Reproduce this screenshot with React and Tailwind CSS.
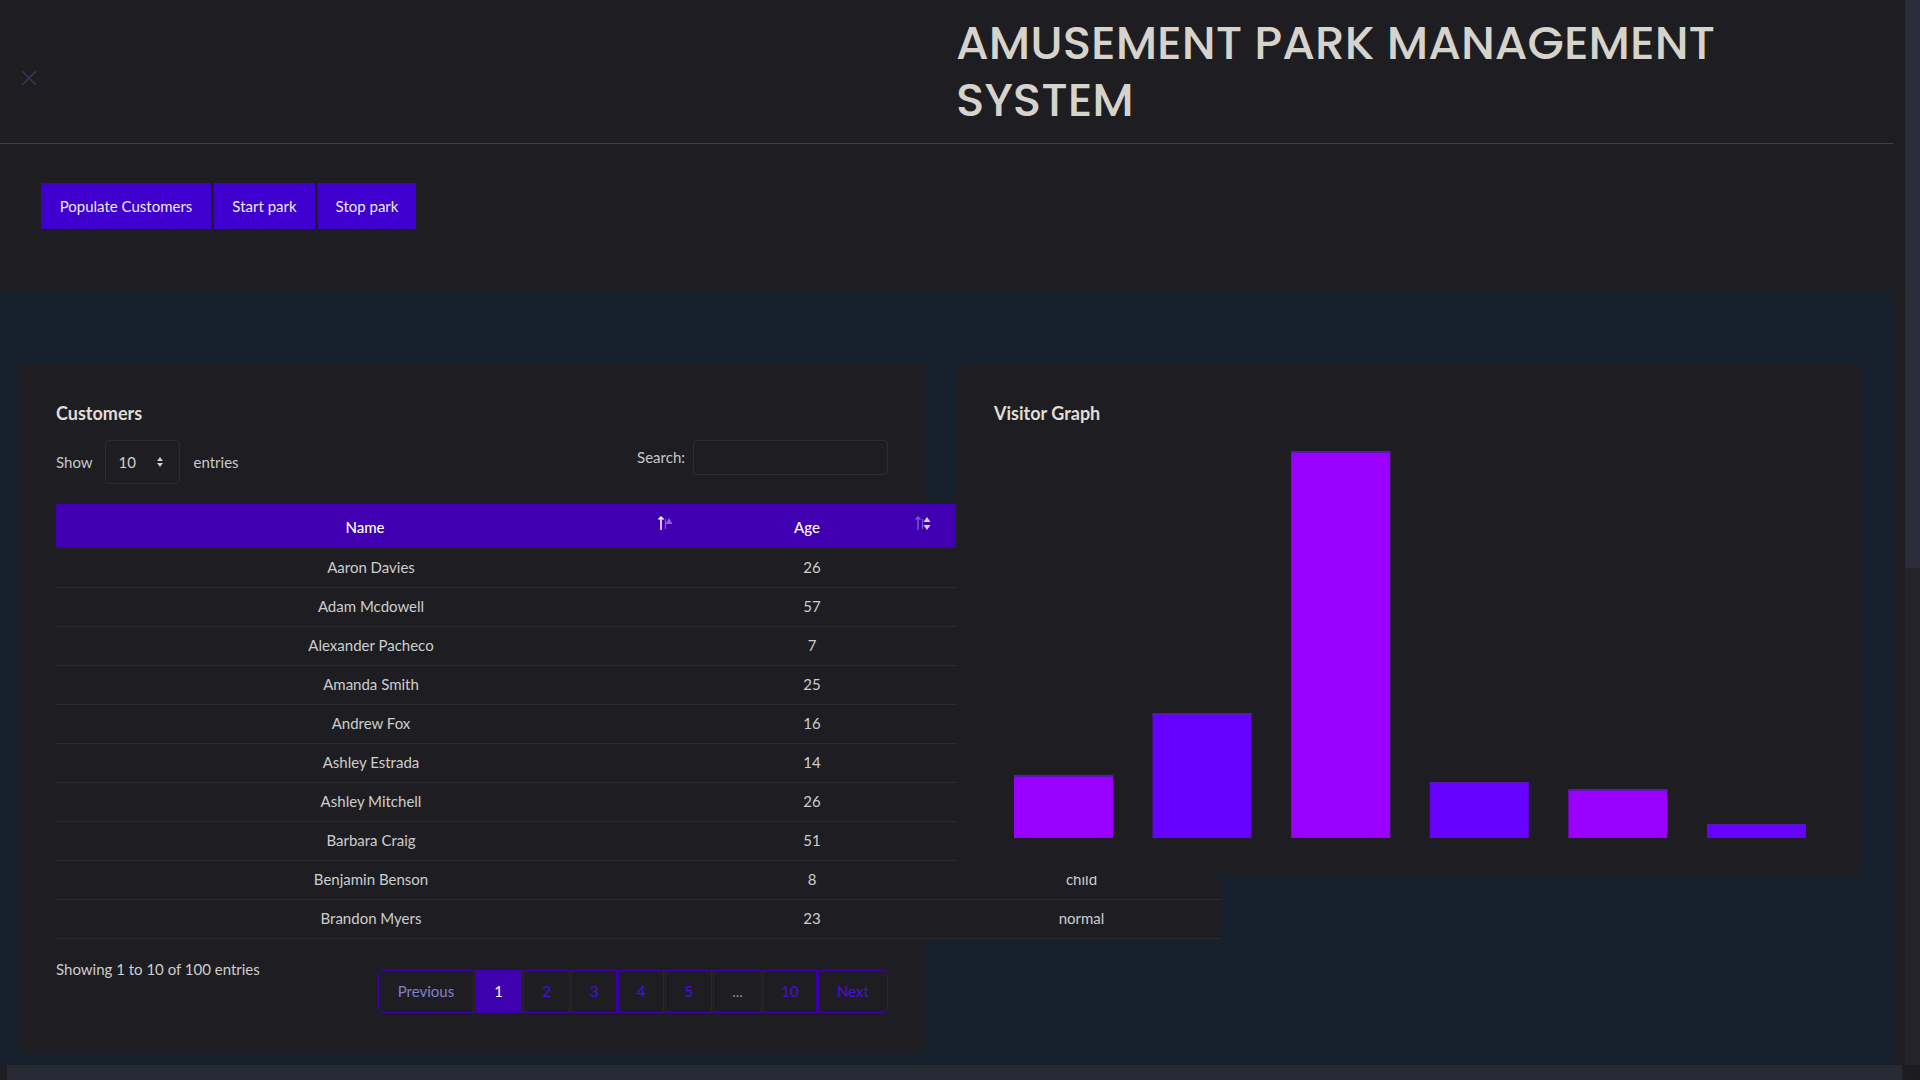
import React from "react";

const customers = [
  { name: "Aaron Davies", age: 26, type: "normal" },
  { name: "Adam Mcdowell", age: 57, type: "normal" },
  { name: "Alexander Pacheco", age: 7, type: "child" },
  { name: "Amanda Smith", age: 25, type: "normal" },
  { name: "Andrew Fox", age: 16, type: "child" },
  { name: "Ashley Estrada", age: 14, type: "child" },
  { name: "Ashley Mitchell", age: 26, type: "normal" },
  { name: "Barbara Craig", age: 51, type: "normal" },
  { name: "Benjamin Benson", age: 8, type: "child" },
  { name: "Brandon Myers", age: 23, type: "normal" },
];

// visitor bars: height in px, colour
const bars = [
  { h: 63, c: "#9900ff" },
  { h: 125, c: "#6600ff" },
  { h: 387, c: "#9900ff" },
  { h: 56, c: "#6600ff" },
  { h: 49, c: "#9900ff" },
  { h: 14, c: "#6600ff" },
];

const pages = [
  { label: "Previous", w: "w-[96px]", cls: "text-[#8080c8] rounded-l-[5px]" },
  { label: "1", w: "w-[47px]", cls: "bg-[#3f00b0] text-white" },
  { label: "2", w: "w-[47px]", cls: "text-[#4a0fd6]" },
  { label: "3", w: "w-[46px]", cls: "text-[#4a0fd6]" },
  { label: "4", w: "w-[46px]", cls: "text-[#4a0fd6]" },
  { label: "5", w: "w-[47px]", cls: "text-[#4a0fd6]" },
  { label: "...", w: "w-[49px]", cls: "text-[#8a8a92]" },
  { label: "10", w: "w-[54px]", cls: "text-[#4a0fd6]" },
  { label: "Next", w: "w-[70px]", cls: "text-[#4a0fd6] rounded-r-[5px]" },
];

const SortIcon = ({ active }) => (
  <svg width="18" height="16" viewBox="0 0 18 16">
    <path
      d="M4 15V2M1.5 4.5L4 2l2.5 2.5"
      stroke={active ? "#ffffff" : "#7a55d0"}
      strokeWidth="1.5"
      fill="none"
    />
    {active ? (
      <g>
        <path d="M8.5 4v10" stroke="#8a5ad8" strokeWidth="1.2" />
        <path d="M12 3l3.5 6h-7z" fill="#9060e0" />
      </g>
    ) : (
      <g>
        <path d="M8.5 4v10" stroke="#7a55d0" strokeWidth="1.2" />
        <path d="M13 2l3.5 5h-7z M13 15l3.5-5h-7z" fill="#d8d0f0" />
      </g>
    )}
  </svg>
);

function App() {
  return (
    <div className="flex h-screen w-full overflow-hidden bg-[#1e1e22] font-['Lato',sans-serif]">
      <div className="flex min-w-0 flex-1 flex-col">
        <div className="min-h-0 flex-1 overflow-hidden">
          <div className="w-[1893px]">
            {/* header */}
            <header className="flex h-[144px] border-b border-[#2f4552]">
              <div className="w-[956px] pl-[21px] pt-[70px]">
                <svg width="16" height="16" viewBox="0 0 16 16">
                  <path d="M1 1l14 14M15 1L1 15" stroke="#363650" strokeWidth="1.6" />
                </svg>
              </div>
              <h1 className="pt-[14px] font-['Poppins','Inter',sans-serif] text-[47px] font-medium leading-[57px] text-[#d5d3cb]">
                <span className="block">AMUSEMENT PARK MANAGEMENT</span>
                <span className="block">SYSTEM</span>
              </h1>
            </header>

            {/* controls */}
            <div className="flex h-[147px] gap-[3px] pl-[41px] pt-[39px]">
              <button className="h-[46px] w-[170px] bg-[#3f00cf] text-[15px] text-[#ece8ff]">
                Populate Customers
              </button>
              <button className="h-[46px] w-[101px] bg-[#3f00cf] text-[15px] text-[#ece8ff]">
                Start park
              </button>
              <button className="h-[46px] w-[98px] bg-[#3f00cf] text-[15px] text-[#ece8ff]">
                Stop park
              </button>
            </div>

            {/* dashboard */}
            <section className="flex h-[775px] items-start gap-[30px] bg-[#17212e] pl-[18px] pt-[73px]">
              {/* customers */}
              <div className="w-[908px] rounded-[4px] bg-[#1e1e22] px-[38px] pb-[41px] pt-[38px]">
                <h2 className="text-[18px] font-bold leading-[22px] text-[#e0ddd5]">Customers</h2>
                <div className="mt-[16px] flex items-start justify-between">
                  <div className="flex items-center text-[15px] text-[#c8c8c8]">
                    <span>Show</span>
                    <div className="ml-[12px] flex h-[44px] w-[75px] items-center justify-between rounded-[4px] border border-[#2c2c33] pl-[13px] pr-[15px] text-[#d0d0d0]">
                      <span>10</span>
                      <svg width="8" height="12" viewBox="0 0 8 12">
                        <path d="M4 1l3 4H1zM4 11l3-4H1z" fill="#d0d0d0" />
                      </svg>
                    </div>
                    <span className="ml-[14px]">entries</span>
                  </div>
                  <div className="flex items-center text-[15px] text-[#c8c8c8]">
                    <span>Search:</span>
                    <div className="ml-[8px] h-[35px] w-[195px] rounded-[4px] border border-[#2c2c33]" />
                  </div>
                </div>

                <table className="mt-[20px] w-[1165px] max-w-none table-fixed border-collapse text-[15px]">
                  <colgroup>
                    <col className="w-[630px]" />
                    <col className="w-[252px]" />
                    <col className="w-[283px]" />
                  </colgroup>
                  <thead>
                    <tr className="h-[44px] bg-[#4000b2] text-white">
                      <th className="relative pr-[12px] pt-[3px] font-medium">
                        Name
                        <span className="absolute right-[11px] top-[11px]">
                          <SortIcon active />
                        </span>
                      </th>
                      <th className="relative pr-[10px] pt-[3px] font-medium">
                        Age
                        <span className="absolute right-[6px] top-[11px]">
                          <SortIcon />
                        </span>
                      </th>
                      <th className="relative pr-[10px] pt-[3px] font-medium">
                        Type
                        <span className="absolute right-[6px] top-[11px]">
                          <SortIcon />
                        </span>
                      </th>
                    </tr>
                  </thead>
                  <tbody className="text-[#cdcdcd]">
                    {customers.map((c) => (
                      <tr key={c.name} className="h-[39px] border-b border-[#2a2a30] bg-[#1e1e22]">
                        <td className="text-center">{c.name}</td>
                        <td className="text-center">{c.age}</td>
                        <td className="pl-[4px] text-center">{c.type}</td>
                      </tr>
                    ))}
                  </tbody>
                </table>

                <div className="mt-[19px] flex items-start justify-between text-[15px] text-[#cdcdcd]">
                  <span className="leading-[22px]">Showing 1 to 10 of 100 entries</span>
                  <div className="mt-[12px] flex gap-[1px]">
                    {pages.map((p) => (
                      <span
                        key={p.label}
                        className={`flex h-[43px] items-center justify-center border border-[#3f00b0] ${p.w} ${p.cls}`}
                      >
                        {p.label}
                      </span>
                    ))}
                  </div>
                </div>
              </div>

              {/* visitor graph */}
              <div className="relative h-[512px] w-[906px] rounded-[4px] bg-[#1e1e22] pl-[38px] pt-[38px]">
                <h2 className="text-[18px] font-bold leading-[22px] text-[#e0ddd5]">Visitor Graph</h2>
                <svg className="mt-[14px]" width="832" height="400" viewBox="0 0 832 400">
                  {bars.map((b, i) => (
                    <g key={i}>
                      <rect x={20 + i * 138.6} y={400 - b.h} width="99" height={b.h} fill={b.c} />
                      <rect x={20 + i * 138.6} y={400 - b.h} width="99" height="2" fill="#5a16b8" />
                    </g>
                  ))}
                </svg>
              </div>
            </section>
          </div>
        </div>
        {/* horizontal scrollbar */}
        <div className="flex h-[15px] bg-[#1e1e22] pl-[7px] pr-[3px]">
          <div className="flex-1 bg-[#2a2a36]" />
        </div>
      </div>
      {/* vertical scrollbar */}
      <div className="flex w-[15px] flex-col bg-[#232329]">
        <div className="h-[568px] bg-[#2c2c3a]" />
        <div className="flex-1" />
        <div className="h-[15px] bg-[#1c1c20]" />
      </div>
    </div>
  );
}

export default App;
